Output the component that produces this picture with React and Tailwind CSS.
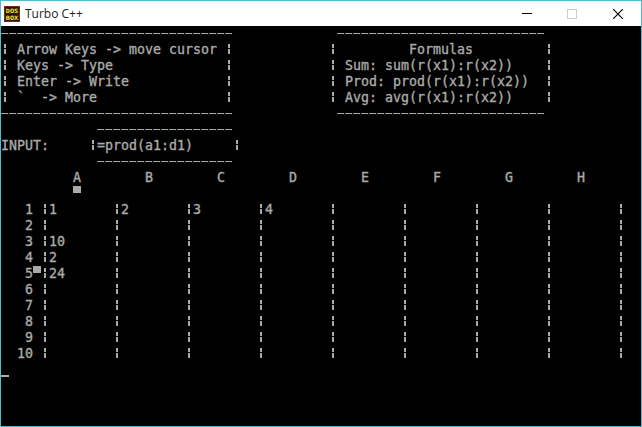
const COLUMNS = ["A", "B", "C", "D", "E", "F", "G", "H"];

const SHEET = [
  ["1", "2", "3", "4"],
  [],
  ["10"],
  ["2"],
  ["24"],
  [],
  [],
  [],
  [],
  [],
];

const ACTIVE_ROW = 5;

// Places the given [column, text] pieces on one 80-column line.
function line(...pieces) {
  return pieces.reduce((out, [col, text]) => out.padEnd(col) + text, "");
}

const dashes = (n) => "-".repeat(n);

const LINES = [
  line([0, dashes(29)], [42, dashes(26)]),
  line([0, "|"], [2, "Arrow Keys -> move cursor"], [28, "|"], [41, "|"], [51, "Formulas"], [68, "|"]),
  line([0, "|"], [2, "Keys -> Type"], [28, "|"], [41, "|"], [43, "Sum: sum(r(x1):r(x2))"], [68, "|"]),
  line([0, "|"], [2, "Enter -> Write"], [28, "|"], [41, "|"], [43, "Prod: prod(r(x1):r(x2))"], [68, "|"]),
  line([0, "|"], [2, "`  -> More"], [28, "|"], [41, "|"], [43, "Avg: avg(r(x1):r(x2))"], [68, "|"]),
  line([0, dashes(29)], [42, dashes(26)]),
  line([12, dashes(17)]),
  line([0, "INPUT:"], [11, "|"], [12, "=prod(a1:d1)"], [29, "|"]),
  line([12, dashes(17)]),
  line(...COLUMNS.map((name, i) => [9 + i * 9, name])),
  line([9, "▀"]),
  ...SHEET.map((cells, r) => {
    const n = r + 1;
    const bars = Array.from({ length: 9 }, (_, i) => [5 + i * 9, "|" + (cells[i] ?? "")]);
    const cursor = n === ACTIVE_ROW ? [[4, "▀"]] : [];
    return line([0, String(n).padStart(4)], ...cursor, ...bars);
  }),
  line([0, "_"]),
];

function Token({ text }) {
  if (text === "|") {
    return (
      <span className="flex h-4 w-2 shrink-0 flex-col items-center gap-px pt-0.5">
        <span className="h-1 w-0.5 bg-[#aaaaaa]" />
        <span className="h-[5px] w-0.5 bg-[#aaaaaa]" />
      </span>
    );
  }
  if (text === "▀") {
    return <span className="h-[7px] w-2 shrink-0 bg-[#aaaaaa]" />;
  }
  if (text === "_") {
    return <span className="mt-[13px] h-0.5 w-2 shrink-0 bg-[#aaaaaa]" />;
  }
  if (text.startsWith("---")) {
    return (
      <span className="mt-[7px] flex h-px shrink-0">
        {[...text].map((_, i) => (
          <span key={i} className="mr-px h-px w-[7px] bg-[#aaaaaa]" />
        ))}
      </span>
    );
  }
  return (
    <span className="shrink-0 whitespace-pre" style={{ width: text.length * 8 }}>
      {text}
    </span>
  );
}

function Line({ text }) {
  const tokens = text.match(/-{3,}|[|▀_]| +|[^ |▀_]+/g) ?? [];
  return (
    <div className="flex h-4 items-start">
      {tokens.map((t, i) => (
        <Token key={i} text={t} />
      ))}
    </div>
  );
}

function DosBoxIcon() {
  return (
    <svg width="16" height="16" viewBox="0 0 16 16" className="shrink-0">
      <rect width="16" height="16" fill="#6b3410" />
      <rect x="1" y="1" width="14" height="14" fill="#2b1404" />
      <g fill="#f5ee2a" fontFamily="'DejaVu Sans Mono', monospace" fontWeight="700" fontSize="6">
        <text x="1.8" y="6.9" textLength="12.4" lengthAdjust="spacingAndGlyphs">DOS</text>
        <text x="1.8" y="13.9" textLength="12.4" lengthAdjust="spacingAndGlyphs">BOX</text>
      </g>
    </svg>
  );
}

function TitleBar() {
  return (
    <div className="flex h-[25px] items-center justify-between bg-white pr-[18px] pl-[3px]">
      <div className="flex items-center gap-[5px]">
        <DosBoxIcon />
        <span className="font-['Open_Sans',sans-serif] text-[12px] leading-4 text-[#222222]">
          Turbo C++
        </span>
      </div>
      <div className="flex items-center">
        <span className="mr-[35px] h-px w-2.5 bg-black" />
        <span className="mr-9 size-2.5 border border-[#cccccc]" />
        <svg width="10" height="10" viewBox="0 0 10 10" stroke="#000" strokeWidth="1.2">
          <path d="M0.2 0.2 L9.8 9.8 M9.8 0.2 L0.2 9.8" />
        </svg>
      </div>
    </div>
  );
}

export default function App() {
  return (
    <div className="flex h-[427px] w-[642px] flex-col overflow-hidden border border-[#56b8cb] bg-black">
      <TitleBar />
      <div className="font-['DejaVu_Sans_Mono',monospace] text-[13.29px] leading-4 text-[#aaaaaa] [-webkit-text-stroke:0.35px_#aaaaaa]">
        {LINES.map((text, i) => (
          <Line key={i} text={text} />
        ))}
      </div>
    </div>
  );
}
